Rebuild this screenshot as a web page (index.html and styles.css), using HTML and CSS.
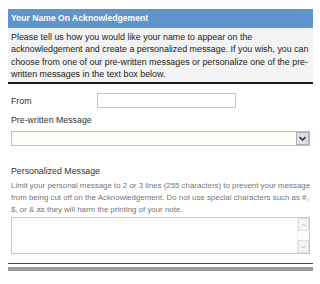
FILE: index.html
```html
<!DOCTYPE html>
<html lang="en">
<head>
    <meta charset="UTF-8">
    <meta name="viewport" content="width=device-width, initial-scale=1.0">
    <title>Your Name On Acknowledgement</title>
    <link rel="stylesheet" href="styles.css">
</head>
<body>
<div class="panel">
    <div class="panel-header">Your Name On Acknowledgement</div>

    <div class="intro">
        Please tell us how you would like your name to appear on the
        acknowledgement and create a personalized message. If you wish, you can
        choose from one of our pre-written messages or personalize one of the pre-written messages in the text box below.
    </div>

    <form class="ack-form">
        <div class="from-row">
            <label for="from-inp">From</label>
            <input type="text" id="from-inp" class="from-inp">
        </div>

        <div class="field-label">Pre-written Message</div>
        <div class="fake-select">
            <div class="fake-select-value"></div>
            <div class="fake-select-btn">
                <svg width="7" height="5" viewBox="0 0 7 5"><path d="M0.5 1 L3.5 4 L6.5 1" fill="none" stroke="#333" stroke-width="1.6"/></svg>
            </div>
        </div>

        <div class="field-label personal">Personalized Message</div>
        <p class="hint">
            Limit your personal message to 2 or 3 lines (255 characters) to prevent your message<br>
            from being cut off on the Acknowledgement. Do not use special characters such as #,<br>
            $, or &amp; as they will harm the printing of your note.
        </p>
        <div class="msg-box">
            <textarea class="msg-inp"></textarea>
            <div class="scrollbar">
                <div class="scroll-btn">
                    <svg width="5" height="4" viewBox="0 0 5 4"><path d="M0.5 3 L2.5 1 L4.5 3" fill="none" stroke="#bbb" stroke-width="1"/></svg>
                </div>
                <div class="scroll-track"></div>
                <div class="scroll-btn">
                    <svg width="5" height="4" viewBox="0 0 5 4"><path d="M0.5 1 L2.5 3 L4.5 1" fill="none" stroke="#bbb" stroke-width="1"/></svg>
                </div>
            </div>
        </div>
    </form>

    <div class="footer-line"></div>
    <div class="footer-bar"></div>
</div>
</body>
</html>
```

FILE: styles.css
```css
body {
    font-family: "Liberation Sans", Arial, sans-serif;
    margin: 0;
    background-color: #fff;
    color: #222;
}

.panel {
    width: 305px;
    margin: 9px 0 0 8px;
}

.panel-header {
    background-color: #5f94cc;
    color: #fff;
    font-weight: bold;
    font-size: 8.6px;
    height: 19px;
    line-height: 19px;
    padding-left: 3px;
}

.intro {
    background-color: #f3f3f3;
    font-size: 8.9px;
    line-height: 12.3px;
    padding: 3px 4px 2px 3px;
    border-bottom: 2px solid #1e1e1e;
}

.ack-form {
    padding: 0 3px;
}

.from-row {
    display: flex;
    align-items: center;
    margin-top: 9px;
}

.from-row label,
.field-label {
    font-size: 8.8px;
    color: #333;
}

.from-row label {
    width: 86px;
}

.from-inp {
    width: 139px;
    height: 15px;
    box-sizing: border-box;
    border: 1px solid #c4c4c4;
    padding: 0;
    margin: 0;
}

.field-label {
    margin-top: 7px;
    height: 12px;
}

.fake-select {
    display: flex;
    width: 299px;
    height: 15px;
    margin-top: 4px;
    box-sizing: border-box;
    border: 1px solid #bfbfbf;
    background-color: #fffef9;
}

.fake-select-value {
    flex: 1;
}

.fake-select-btn {
    width: 11px;
    display: flex;
    align-items: center;
    justify-content: center;
    background-color: #dcdfe6;
    border: 1px solid #a9aeb8;
}

.field-label.personal {
    margin-top: 20px;
}

.hint {
    font-size: 7.9px;
    line-height: 12px;
    color: #767676;
    white-space: nowrap;
    margin: 2px 0 0 0;
}

.msg-box {
    display: flex;
    width: 299px;
    height: 37px;
    margin-top: 1px;
    box-sizing: border-box;
    border: 1px solid #c8c8c8;
}

.msg-inp {
    flex: 1;
    border: none;
    resize: none;
    outline: none;
    margin: 0;
    padding: 0;
}

.scrollbar {
    width: 11px;
    display: flex;
    flex-direction: column;
    border-left: 1px solid #eee;
}

.scroll-btn {
    height: 11px;
    display: flex;
    align-items: center;
    justify-content: center;
    background-color: #f4f4f4;
    border: 1px solid #e0e0e0;
}

.scroll-track {
    flex: 1;
}

.footer-line {
    height: 1px;
    background-color: #4a4a4a;
    margin-top: 9px;
}

.footer-bar {
    height: 4px;
    background-color: #9a9a9a;
    margin-top: 3px;
}
```
